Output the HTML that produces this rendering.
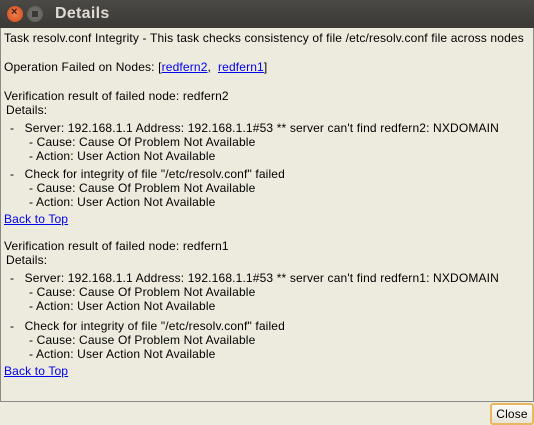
<!DOCTYPE html>
<html><head><style>
body{margin:0;width:534px;height:424px;background:#edeade;font-family:"Liberation Sans",sans-serif;font-size:12px;letter-spacing:0.15px;color:#000;position:relative;overflow:hidden}
.tb{position:absolute;left:0;top:0;width:534px;height:28px;background:linear-gradient(#4a4945,#3a3935)}
.tt{position:absolute;left:55px;top:5px;color:#dfdbd2;font-weight:bold;font-size:16px;letter-spacing:0.3px}
.c{position:absolute;width:16px;height:16px;border-radius:50%;top:6px}
.panel{position:absolute;left:0;top:28px;width:532px;height:373px;border:1px solid #8a8a8a;border-top:none;background:#edeade}
.l{position:absolute;white-space:pre;line-height:14px}
a{color:#00e;text-decoration:underline}
.btn{position:absolute;left:490px;top:403px;width:40px;height:18px;border:2px solid #e8b860;border-radius:3px;background:linear-gradient(#fdfcf8,#e8e4d8);font-size:12px;text-align:center;line-height:18px;box-sizing:content-box}
</style></head><body>
<div class="tb"></div>
<div class="c" style="left:7px;background:radial-gradient(#f08050,#d04818)"><span style="position:absolute;left:4px;top:0px;color:#3a2010;font-size:11px;font-weight:bold">×</span></div>
<div class="c" style="left:27px;background:radial-gradient(#7a7873,#5a5854)"><span style="position:absolute;left:5px;top:5px;width:6px;height:6px;background:#3a3935"></span></div>
<div class="tt">Details</div>
<div class="panel"></div>
<div class="l" style="left:4px;top:31px">Task resolv.conf Integrity - This task checks consistency of file /etc/resolv.conf file across nodes</div>
<div class="l" style="left:4px;top:60px">Operation Failed on Nodes: [<a>redfern2</a>,  <a>redfern1</a>]</div>
<div class="l" style="left:4px;top:89px">Verification result of failed node: redfern2</div>
<div class="l" style="left:6px;top:103px">Details:</div>
<div class="l" style="left:10px;top:121px">-   Server: 192.168.1.1 Address: 192.168.1.1#53 ** server can't find redfern2: NXDOMAIN</div>
<div class="l" style="left:29px;top:135px">- Cause: Cause Of Problem Not Available</div>
<div class="l" style="left:29px;top:149px">- Action: User Action Not Available</div>
<div class="l" style="left:10px;top:167px">-   Check for integrity of file "/etc/resolv.conf" failed</div>
<div class="l" style="left:29px;top:181px">- Cause: Cause Of Problem Not Available</div>
<div class="l" style="left:29px;top:195px">- Action: User Action Not Available</div>
<div class="l" style="left:4px;top:212px"><a>Back to Top</a></div>
<div class="l" style="left:4px;top:239px">Verification result of failed node: redfern1</div>
<div class="l" style="left:6px;top:253px">Details:</div>
<div class="l" style="left:10px;top:271px">-   Server: 192.168.1.1 Address: 192.168.1.1#53 ** server can't find redfern1: NXDOMAIN</div>
<div class="l" style="left:29px;top:285px">- Cause: Cause Of Problem Not Available</div>
<div class="l" style="left:29px;top:299px">- Action: User Action Not Available</div>
<div class="l" style="left:10px;top:319px">-   Check for integrity of file "/etc/resolv.conf" failed</div>
<div class="l" style="left:29px;top:333px">- Cause: Cause Of Problem Not Available</div>
<div class="l" style="left:29px;top:347px">- Action: User Action Not Available</div>
<div class="l" style="left:4px;top:364px"><a>Back to Top</a></div>
<div class="btn">Close</div>
</body></html>
